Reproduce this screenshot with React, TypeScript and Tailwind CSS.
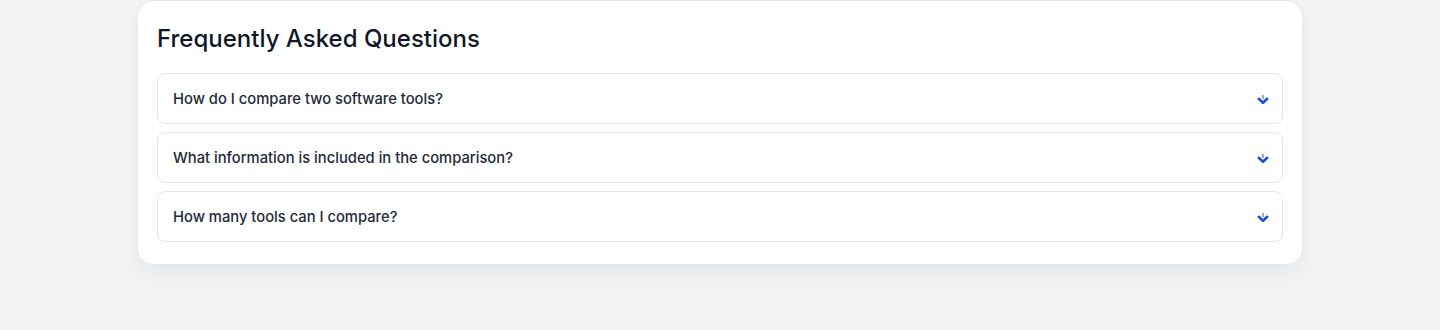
import React, { useState } from 'react';

const faqs = [
  { q: 'How do I compare two software tools?', a: 'Pick two tools from the list and open the comparison view to see them side by side.' },
  { q: 'What information is included in the comparison?', a: 'Pricing, features, integrations, ratings and platform support.' },
  { q: 'How many tools can I compare?', a: 'You can compare up to two tools at a time.' },
];

const Chevron = () => (
  <svg width="12" height="12" viewBox="0 0 12 12" className="shrink-0">
    <line x1="6" y1="1" x2="6" y2="5" stroke="#6b7280" strokeWidth="1.2" />
    <path d="M1.8 4.8 L6 8.8 L10.2 4.8" fill="none" stroke="#1d4ed8" strokeWidth="2.6" strokeLinejoin="round" strokeLinecap="round" />
  </svg>
);

export default function App() {
  const [open, setOpen] = useState<number | null>(null);

  return (
    <div className="min-h-[330px] bg-[#f3f4f6] font-['Inter',sans-serif]">
      <div className="mx-auto w-[1166px] rounded-2xl border border-gray-200 bg-white pl-[19px] pr-[19px] pt-5 pb-[22px] shadow-[0_10px_25px_rgba(0,0,0,0.06)]">
        <h2 className="mb-4 text-2xl leading-[36px] font-medium text-gray-900">Frequently Asked Questions</h2>
        <div className="flex flex-col gap-2">
          {faqs.map((f, i) => (
            <div key={f.q} className="rounded-lg border border-gray-200 bg-white">
              <button
                onClick={() => setOpen(open === i ? null : i)}
                className="flex w-full items-center justify-between pl-[15px] pr-[13px] pt-[16px] pb-[14px] text-left text-[14.75px] leading-[19px] font-medium text-gray-800"
              >
                <span>{f.q}</span>
                <Chevron />
              </button>
              {open === i && <div className="px-4 pb-4 text-sm text-gray-600">{f.a}</div>}
            </div>
          ))}
        </div>
      </div>
    </div>
  );
}
